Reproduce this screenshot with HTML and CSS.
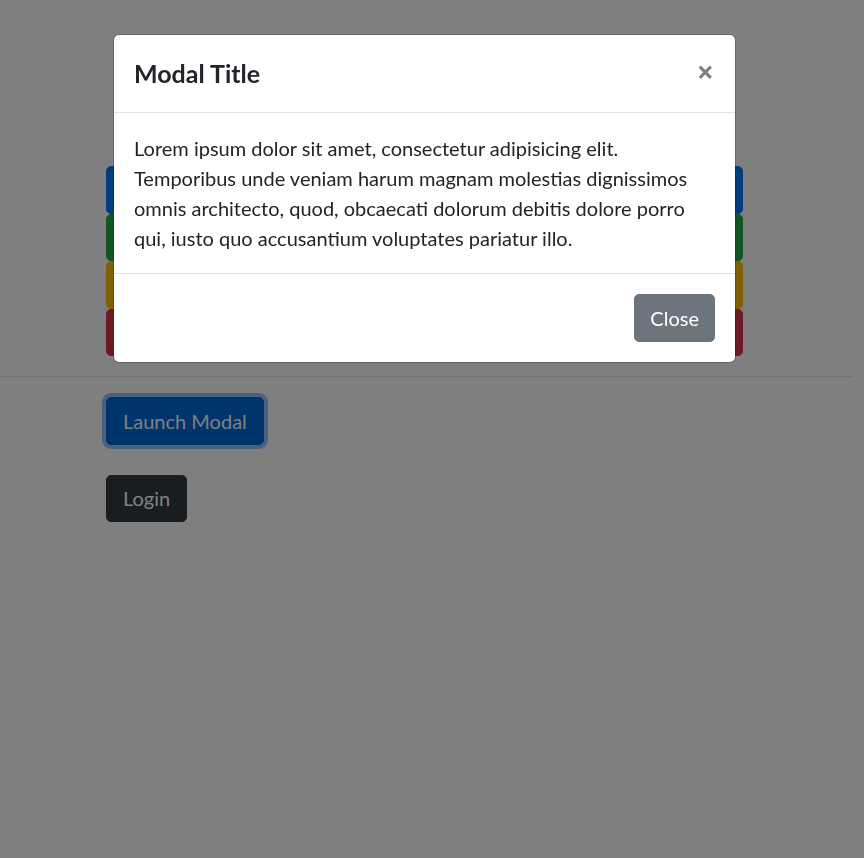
FILE: index.html
```html
<!DOCTYPE html>
<html lang="en">
<head>
<meta charset="utf-8">
<title>Modal</title>
<link rel="stylesheet" href="styles.css">
</head>
<body>
<div class="page">
  <div class="container">
    <div class="btn-stack">
      <button class="btn btn-primary" aria-label="Primary"></button>
      <button class="btn btn-success" aria-label="Success"></button>
      <button class="btn btn-warning" aria-label="Warning"></button>
      <button class="btn btn-danger" aria-label="Danger"></button>
    </div>
  </div>
  <hr class="divider">
  <div class="container">
    <button class="btn btn-primary btn-focus">Launch Modal</button>
    <div class="login-row">
      <button class="btn btn-dark">Login</button>
    </div>
  </div>
</div>

<div class="backdrop"></div>
<div class="modal">
  <div class="modal-dialog">
    <div class="modal-header">
      <h5 class="modal-title">Modal Title</h5>
      <button class="close" aria-label="Close">&times;</button>
    </div>
    <div class="modal-body">
      <p>Lorem ipsum dolor sit amet, consectetur adipisicing elit. Temporibus unde veniam harum magnam molestias dignissimos omnis architecto, quod, obcaecati dolorum debitis dolore porro qui, iusto quo accusantium voluptates pariatur illo.</p>
    </div>
    <div class="modal-footer">
      <button class="btn btn-secondary">Close</button>
    </div>
  </div>
</div>
</body>
</html>
```

FILE: styles.css
```css
* { box-sizing: border-box; }
html, body {
  margin: 0;
  background: #fff;
  font-family: "Lato", "Noto Sans", sans-serif;
  font-size: 20px;
  line-height: 30px;
  color: #212529;
  overflow: hidden;
}
.page {
  width: 849px;
  padding-top: 166px;
}
.container {
  width: 637px;
  margin: 0 auto;
}
.btn {
  display: inline-block;
  font-family: inherit;
  font-size: 20px;
  line-height: 30px;
  padding: 7.75px 15px;
  border: 1px solid transparent;
  border-radius: 5px;
  color: #fff;
  cursor: pointer;
}
.btn-stack {
  display: flex;
  flex-direction: column;
}
.btn-stack .btn {
  width: 100%;
  display: block;
  height: 47.5px;
}
.btn-primary { background: #007bff; border-color: #007bff; }
.btn-success { background: #28a745; border-color: #28a745; }
.btn-warning { background: #ffc107; border-color: #ffc107; color: #212529; }
.btn-danger { background: #dc3545; border-color: #dc3545; }
.btn-dark { background: #343a40; border-color: #343a40; padding: 7.75px 16px; }
.btn-secondary { background: #6c757d; border-color: #6c757d; }
.btn-focus {
  background: #0069d9;
  border-color: #0062cc;
  padding: 7.75px 16px;
  box-shadow: 0 0 0 4px rgba(38, 143, 255, 0.5);
}
.divider {
  margin: 20px 0;
  border: 0;
  border-top: 1px solid rgba(0, 0, 0, 0.1);
  width: 852px;
}
.login-row {
  margin-top: 30px;
}
.backdrop {
  position: fixed;
  inset: 0;
  background: rgba(0, 0, 0, 0.5);
}
.modal {
  position: fixed;
  top: 0;
  left: 0;
  width: 849px;
  height: 100%;
}
.modal-dialog {
  width: 623px;
  margin: 34px 0 0 113px;
  background: #fff;
  border: 1px solid rgba(0, 0, 0, 0.2);
  border-radius: 6px;
  background-clip: padding-box;
}
.modal-header {
  display: flex;
  align-items: flex-start;
  justify-content: space-between;
  padding: 20px;
  border-bottom: 1px solid #dee2e6;
}
.modal-title {
  margin: 0;
  font-size: 25px;
  line-height: 37px;
  font-weight: 700;
}
.close {
  background: none;
  border: 0;
  padding: 0;
  margin: -2px 1px 0 0;
  font-family: "Noto Sans", sans-serif;
  font-size: 30px;
  line-height: 37px;
  font-weight: 700;
  color: #000;
  opacity: 0.5;
  cursor: pointer;
}
.modal-body {
  padding: 20px;
}
.modal-body p {
  margin: 0;
}
.modal-footer {
  display: flex;
  justify-content: flex-end;
  padding: 15px;
  border-top: 1px solid #dee2e6;
}
.modal-footer .btn {
  margin: 5px;
}
```
